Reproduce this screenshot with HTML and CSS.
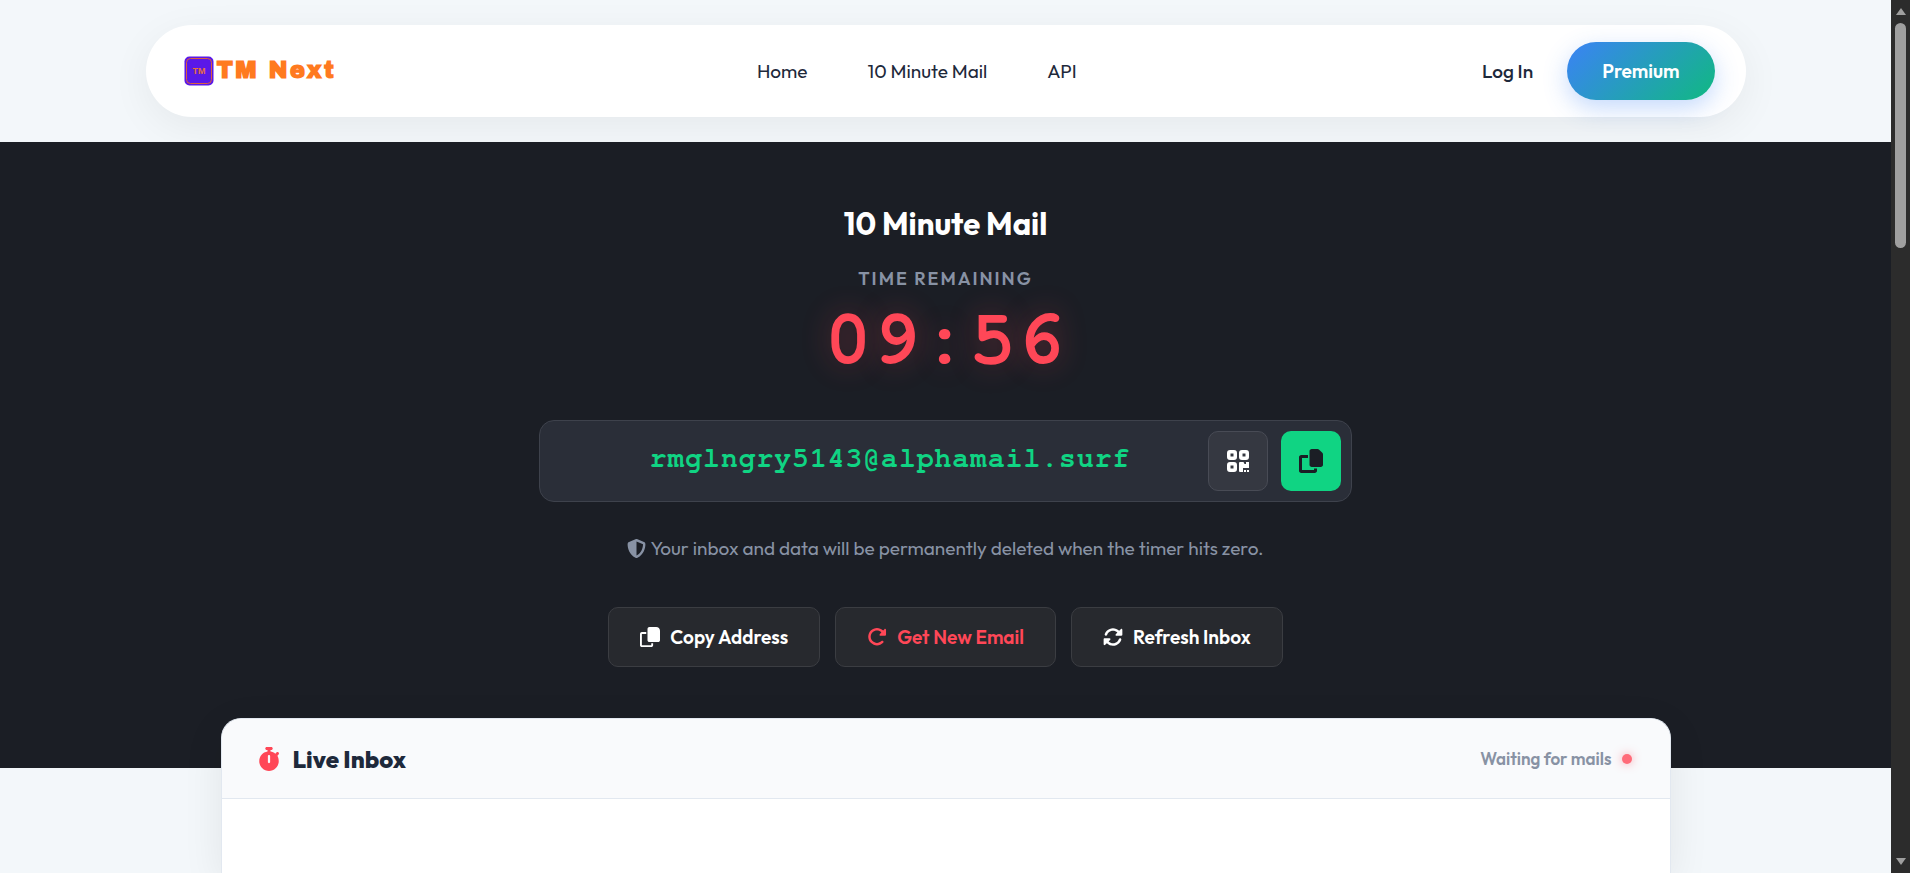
FILE: index.html
```html
<!DOCTYPE html>
<html lang="en">
<head>
    <meta charset="UTF-8">
    <meta name="viewport" content="width=device-width, initial-scale=1.0">
    <title>10 Minute Mail</title>
    <link rel="stylesheet" href="styles.css">
</head>
<body>
    <div class="page">
        <header class="site-header">
            <nav class="navbar">
                <a href="#" class="logo">
                    <svg class="logo-mark" viewBox="0 0 30 30" aria-hidden="true">
                        <rect x="0.5" y="0.5" width="29" height="29" rx="5" fill="#5a18e8"/>
                        <rect x="2.500" y="2.500" width="25" height="25" rx="4" fill="none" stroke="#d9603f" stroke-width="1"/>
                        <text x="15" y="18" text-anchor="middle" class="logo-tm">TM</text>
                    </svg>
                    <span class="logo-text">TM Next</span>
                </a>
                <div class="nav-links">
                    <a href="#">Home</a>
                    <a href="#">10 Minute Mail</a>
                    <a href="#">API</a>
                </div>
                <div class="nav-actions">
                    <a href="#" class="login">Log In</a>
                    <a href="#" class="premium">Premium</a>
                </div>
            </nav>
        </header>

        <section class="hero">
            <h1>10 Minute Mail</h1>
            <div class="timer-label">Time Remaining</div>
            <div class="timer" id="timer">09:56</div>

            <div class="email-box">
                <span class="email" id="email">rmglngry5143@alphamail.surf</span>
                <button type="button" class="icon-btn" aria-label="Show QR code">
                    <svg viewBox="0 0 24 24" fill="currentColor">
                        <path fill-rule="evenodd" d="M4 1h4a3 3 0 0 1 3 3v4a3 3 0 0 1-3 3H4a3 3 0 0 1-3-3V4a3 3 0 0 1 3-3zM4.500 4.500v3h3v-3zM16 1h4a3 3 0 0 1 3 3v4a3 3 0 0 1-3 3h-4a3 3 0 0 1-3-3V4a3 3 0 0 1 3-3zM16.500 4.500v3h3v-3zM4 13h4a3 3 0 0 1 3 3v4a3 3 0 0 1-3 3H4a3 3 0 0 1-3-3v-4a3 3 0 0 1 3-3zM4.500 16.500v3h3v-3z"/>
                        <path d="M14 13h3.500l1 2h1.500v-2h3v6h-6v4h-3a1 1 0 0 1-1-1v-8a1 1 0 0 1 1-1zM18 21h2v2h-2zM21 21h2v2h-2z"/>
                    </svg>
                </button>
                <button type="button" class="icon-btn copy-btn" aria-label="Copy email">
                    <svg viewBox="0 0 512 512" fill="currentColor">
                        <path d="M272 0h124.100c12.700 0 24.900 5.100 33.900 14.100l67.900 67.900c9 9 14.100 21.200 14.100 33.900V336c0 26.500-21.500 48-48 48H272c-26.500 0-48-21.500-48-48V48c0-26.500 21.500-48 48-48zM48 128h144v64H64v256h256v-32h64v48c0 26.500-21.500 48-48 48H48c-26.500 0-48-21.500-48-48V176c0-26.500 21.500-48 48-48z"/>
                    </svg>
                </button>
            </div>

            <p class="notice">
                <svg viewBox="0 0 512 512" fill="currentColor" aria-hidden="true">
                    <path d="M256 0c4.600 0 9.200 1 13.400 2.900l188.300 79.900c22 9.300 38.400 31 38.300 57.200-.5 99.200-41.300 280.700-213.600 363.200-16.700 8-36.100 8-52.800 0C57.300 420.700 16.500 239.200 16 140c-.1-26.200 16.300-47.900 38.300-57.200L242.700 2.900C246.800 1 251.400 0 256 0zm0 66.800v378.100c138-66.800 175.100-214.800 176-303.400L256 66.800z"/>
                </svg>
                Your inbox and data will be permanently deleted when the timer hits zero.
            </p>

            <div class="actions">
                <button type="button" class="action-btn">
                    <svg viewBox="0 0 512 512" fill="currentColor" aria-hidden="true">
                        <path d="M240 0h176c53 0 96 43 96 96v240c0 26.500-21.500 48-48 48H240c-26.500 0-48-21.500-48-48V48c0-26.500 21.500-48 48-48zM48 128h112v48H48v288h240v-48h48v48c0 26.500-21.500 48-48 48H48c-26.500 0-48-21.500-48-48V176c0-26.500 21.500-48 48-48z"/>
                    </svg>
                    Copy Address
                </button>
                <button type="button" class="action-btn danger">
                    <svg viewBox="0 0 512 512" fill="currentColor" aria-hidden="true">
                        <path d="M463.500 224c13.300 0 24-10.700 24-24V72c0-9.700-5.800-18.500-14.800-22.200s-19.300-1.700-26.200 5.200L413.400 88.200c-87.600-86.500-228.700-86.200-315.800 1-87.500 87.500-87.500 229.300 0 316.800s229.300 87.500 316.800 0c12.500-12.500 12.500-32.800 0-45.300s-32.800-12.500-45.300 0c-62.500 62.500-163.800 62.500-226.300 0s-62.500-163.800 0-226.300c62.200-62.200 162.700-62.500 225.300-1L327 183c-6.900 6.900-8.900 17.200-5.200 26.200s12.500 14.800 22.200 14.800h119.500z"/>
                    </svg>
                    Get New Email
                </button>
                <button type="button" class="action-btn">
                    <svg viewBox="0 0 512 512" fill="currentColor" aria-hidden="true">
                        <path d="M142.900 142.900c62.200-62.200 162.700-62.500 225.300-1L327 183c-6.900 6.900-8.900 17.200-5.200 26.200s12.500 14.800 22.200 14.800h127.500c13.300 0 24-10.700 24-24V72c0-9.700-5.800-18.500-14.800-22.200s-19.300-1.700-26.200 5.200L413.400 96.600c-87.600-86.500-228.700-86.200-315.800 1C73.200 122 55.600 150.700 44.800 181.400c-5.900 16.700 2.900 34.900 19.500 40.800s34.900-2.900 40.800-19.500c7.700-21.800 20.200-42.300 37.800-59.800zM16 312v128c0 9.700 5.800 18.500 14.800 22.200s19.300 1.700 26.200-5.200l41.600-41.600c87.600 86.500 228.700 86.200 315.800-1 24.400-24.400 42.100-53.100 52.900-83.700 5.900-16.700-2.900-34.900-19.500-40.800s-34.900 2.900-40.800 19.500c-7.700 21.800-20.200 42.300-37.800 59.800-62.200 62.200-162.700 62.500-225.300 1L185 329c6.900-6.900 8.900-17.200 5.200-26.200S177.700 288 168 288H40c-13.300 0-24 10.700-24 24z"/>
                    </svg>
                    Refresh Inbox
                </button>
            </div>
        </section>

        <main class="inbox">
            <div class="inbox-header">
                <h2>
                    <svg viewBox="0 0 448 512" fill="currentColor" aria-hidden="true">
                        <path fill-rule="evenodd" d="M176 0h96c17.700 0 32 14.300 32 32s-14.300 32-32 32h-16v34.400c38.100 5.800 72.900 21.200 101.900 43.600l24.700-24.700c12.500-12.500 32.800-12.500 45.300 0s12.500 32.800 0 45.300l-24.600 24.600C420.700 221 432 260.700 432 303 432 418 338.900 511 224 511S16 418 16 303c0-104 76-190 176-205V64h-16c-17.700 0-32-14.300-32-32s14.300-32 32-32zM248 192c0-13.300-10.700-24-24-24s-24 10.700-24 24v128c0 13.300 10.700 24 24 24s24-10.700 24-24V192z"/>
                    </svg>
                    Live Inbox
                </h2>
                <div class="status">Waiting for mails <span class="dot"></span></div>
            </div>
        </main>
    </div>

    <div class="scrollbar" aria-hidden="true">
        <span class="arrow up"></span>
        <span class="thumb"></span>
        <span class="arrow down"></span>
    </div>
</body>
</html>
```
FILE: styles.css
```css
* {
    box-sizing: border-box;
}

body {
    margin: 0;
    display: flex;
    height: 100vh;
    overflow: hidden;
    font-family: Outfit, Lato, sans-serif;
    background-color: #f3f7fa;
    color: #1e293b;
}

a {
    color: inherit;
    text-decoration: none;
}

button {
    font-family: inherit;
    cursor: pointer;
}

.page {
    flex: 1;
    display: flex;
    flex-direction: column;
    overflow: hidden;
}

/* Header */
.site-header {
    padding: 25px 20px;
}

.navbar {
    display: flex;
    justify-content: space-between;
    align-items: center;
    max-width: 1600px;
    height: 92px;
    margin: 0 auto;
    padding: 0 31px 0 38px;
    background-color: #fff;
    border-radius: 46px;
    box-shadow: 0 10px 40px rgba(0, 0, 0, 0.06);
}

.logo {
    display: flex;
    align-items: center;
    gap: 3px;
    min-width: 168px;
}

.logo-mark {
    width: 30px;
    height: 30px;
}

.logo-tm {
    font: bold 9px "Liberation Sans", sans-serif;
    fill: #e8703c;
}

.logo-text {
    font-family: "Archivo Black", "Arial Black", Inter, sans-serif;
    font-size: 23px;
    font-weight: 900;
    line-height: 26px;
    letter-spacing: 2px;
    color: #ff7a1f;
}

.nav-links {
    display: flex;
    gap: 60px;
    font-size: 19px;
    font-weight: 400;
}

.nav-actions {
    display: flex;
    align-items: center;
    gap: 34px;
    font-size: 19px;
    font-weight: 500;
}

.premium {
    padding: 18px 35px;
    font-weight: 600;
    line-height: 22px;
    color: #fff;
    background: linear-gradient(135deg, #3b82f6, #10b981);
    border-radius: 29px;
    box-shadow: 0 8px 25px rgba(59, 130, 246, 0.3);
}

/* Hero */
.hero {
    display: flex;
    flex-direction: column;
    align-items: center;
    padding: 60px 20px 101px;
    background-color: #1b1e25;
    color: #fff;
}

.hero h1 {
    margin: 0 0 20px;
    font-size: 31px;
    font-weight: 700;
    line-height: 44px;
}

.timer-label {
    font-size: 18px;
    font-weight: 600;
    line-height: 26px;
    letter-spacing: 2px;
    text-transform: uppercase;
    color: #8892a4;
}

.timer {
    margin: 10px 0 42px;
    font-family: "Nimbus Mono PS", FreeMono, "Courier Prime", "Liberation Mono", monospace;
    font-size: 77px;
    font-weight: 700;
    line-height: 76px;
    letter-spacing: 2px;
    color: #ff4757;
    text-shadow: 0 0 30px rgba(255, 71, 87, 0.3);
}

.email-box {
    display: flex;
    align-items: center;
    gap: 13px;
    width: 100%;
    max-width: 813px;
    padding: 10px;
    background-color: #2a2e38;
    border: 1px solid #3e424c;
    border-radius: 15px;
}

.email {
    flex: 1;
    padding: 0 0 4px 35px;
    text-align: center;
    font-family: "Nimbus Mono PS", FreeMono, "Courier Prime", "Liberation Mono", monospace;
    font-size: 28px;
    font-weight: 700;
    letter-spacing: 1px;
    color: #10d483;
}

.icon-btn {
    display: flex;
    align-items: center;
    justify-content: center;
    width: 60px;
    height: 60px;
    padding: 0;
    color: #fff;
    background-color: #353841;
    border: 1px solid #484b55;
    border-radius: 10px;
}

.icon-btn svg {
    width: 24px;
    height: 24px;
}

.copy-btn {
    color: #1b1e25;
    background-color: #10d483;
    border: none;
}

.notice {
    display: flex;
    align-items: center;
    gap: 4px;
    margin: 34px 0 46px;
    font-size: 19px;
    font-weight: 400;
    line-height: 25px;
    color: #8892a4;
}

.notice svg {
    width: 19px;
    height: 19px;
}

.actions {
    display: flex;
    gap: 15px;
}

.action-btn {
    display: flex;
    align-items: center;
    gap: 10px;
    height: 60px;
    padding: 0 31px;
    font-size: 19px;
    font-weight: 600;
    color: #fff;
    background-color: #27292e;
    border: 1px solid #3b3d42;
    border-radius: 10px;
}

.action-btn svg {
    width: 20px;
    height: 20px;
}

.action-btn.danger {
    color: #ff4757;
}

/* Inbox card, pulled up over the hero */
.inbox {
    flex: 1;
    width: calc(100% - 40px);
    max-width: 1450px;
    margin: -50px auto 0;
    background-color: #fff;
    border: 1px solid #e2e8f0;
    border-bottom: none;
    border-radius: 20px 20px 0 0;
    box-shadow: 0 10px 40px rgba(0, 0, 0, 0.08);
}

.inbox-header {
    display: flex;
    justify-content: space-between;
    align-items: center;
    height: 80px;
    padding: 0 38px 0 36px;
    background-color: #f9fafc;
    border-bottom: 1px solid #e2e8f0;
    border-radius: 20px 20px 0 0;
}

.inbox-header h2 {
    display: flex;
    align-items: center;
    gap: 13px;
    margin: 0;
    font-size: 24px;
    font-weight: 800;
}

.inbox-header svg {
    width: 22px;
    height: 24px;
    color: #ff4757;
}

.status {
    display: flex;
    align-items: center;
    gap: 10px;
    font-size: 17px;
    font-weight: 600;
    color: #8892a4;
}

.dot {
    width: 10px;
    height: 10px;
    border-radius: 50%;
    background-color: #ff6b79;
    box-shadow: 0 0 10px rgba(255, 71, 87, 0.5);
}

/* Scrollbar */
.scrollbar {
    display: flex;
    flex-direction: column;
    align-items: center;
    width: 19px;
    padding: 8px 0 8px;
    background-color: #2c2c2c;
}

.thumb {
    width: 11px;
    height: 225px;
    margin: 8px 0 auto;
    border-radius: 6px;
    background-color: #9f9f9f;
}

.arrow {
    border: 5px solid transparent;
}

.arrow.up {
    border-top: none;
    border-bottom: 7px solid #9f9f9f;
}

.arrow.down {
    border-bottom: none;
    border-top: 7px solid #9f9f9f;
}
```
